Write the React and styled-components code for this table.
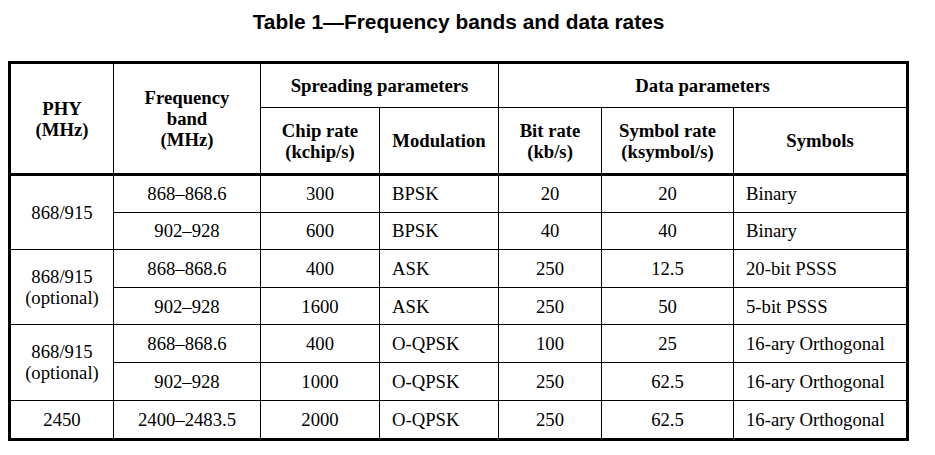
import React from "react";
import styled, { createGlobalStyle } from "styled-components";

const Global = createGlobalStyle`
  html, body { margin: 0; padding: 0; background: #fff; }
  body { font-family: "Liberation Serif", "Times New Roman", serif; color: #000; }
`;

const Page = styled.div`
  width: 901px;
  padding: 10px 0 0 8px;
`;

const Title = styled.h1`
  margin: 0 0 27px;
  font-family: "Liberation Sans", Arial, sans-serif;
  font-weight: 700;
  font-size: 20.9px;
  line-height: 24px;
  text-align: center;
  color: #000;
`;

const Frame = styled.div`
  box-sizing: border-box;
  width: 901px;
  border: 3px solid #000;
`;

const Table = styled.table`
  width: 895px;
  table-layout: fixed;
  border-collapse: collapse;
  border-style: hidden;
  font-family: "Liberation Serif", "Times New Roman", serif;
  font-size: 18.7px;
  line-height: 21px;
  color: #000;
`;

const HeadRow = styled.tr`
  height: ${(p) => p.$h}px;
`;

const Th = styled.th`
  border: 1px solid #000;
  font-weight: 700;
  text-align: center;
  vertical-align: middle;
  padding: 0 4px;
`;

const Body = styled.tbody`
  & > tr:first-child > td {
    border-top: 3px solid #000;
  }
`;

const Row = styled.tr`
  height: 37.6px;
`;

const Td = styled.td`
  border: 1px solid #000;
  font-weight: 400;
  vertical-align: middle;
  text-align: ${(p) => (p.$left ? "left" : "center")};
  padding: ${(p) => (p.$left ? "0 0 0 12px" : "0 4px")};
  white-space: nowrap;
`;

const widths = [102.5, 147, 119, 119, 103, 132, 172.5];

const groups = [
  {
    phy: ["868/915"],
    rows: [
      ["868–868.6", "300", "BPSK", "20", "20", "Binary"],
      ["902–928", "600", "BPSK", "40", "40", "Binary"],
    ],
  },
  {
    phy: ["868/915", "(optional)"],
    rows: [
      ["868–868.6", "400", "ASK", "250", "12.5", "20-bit PSSS"],
      ["902–928", "1600", "ASK", "250", "50", "5-bit PSSS"],
    ],
  },
  {
    phy: ["868/915", "(optional)"],
    rows: [
      ["868–868.6", "400", "O-QPSK", "100", "25", "16-ary Orthogonal"],
      ["902–928", "1000", "O-QPSK", "250", "62.5", "16-ary Orthogonal"],
    ],
  },
  {
    phy: ["2450"],
    rows: [["2400–2483.5", "2000", "O-QPSK", "250", "62.5", "16-ary Orthogonal"]],
  },
];

const Lines = ({ items }) =>
  items.map((t, i) => (
    <React.Fragment key={i}>
      {i > 0 && <br />}
      {t}
    </React.Fragment>
  ));

export default function App() {
  return (
    <>
      <Global />
      <Page>
        <Title>Table 1—Frequency bands and data rates</Title>
        <Frame>
          <Table>
            <colgroup>
              {widths.map((w, i) => (
                <col key={i} style={{ width: `${w}px` }} />
              ))}
            </colgroup>
            <thead>
              <HeadRow $h={43.5}>
                <Th rowSpan={2}>
                  <Lines items={["PHY", "(MHz)"]} />
                </Th>
                <Th rowSpan={2}>
                  <Lines items={["Frequency", "band", "(MHz)"]} />
                </Th>
                <Th colSpan={2}>Spreading parameters</Th>
                <Th colSpan={3}>Data parameters</Th>
              </HeadRow>
              <HeadRow $h={67}>
                <Th>
                  <Lines items={["Chip rate", "(kchip/s)"]} />
                </Th>
                <Th>Modulation</Th>
                <Th>
                  <Lines items={["Bit rate", "(kb/s)"]} />
                </Th>
                <Th>
                  <Lines items={["Symbol rate", "(ksymbol/s)"]} />
                </Th>
                <Th>Symbols</Th>
              </HeadRow>
            </thead>
            <Body>
              {groups.map((g, gi) =>
                g.rows.map((r, ri) => (
                  <Row key={`${gi}-${ri}`}>
                    {ri === 0 && (
                      <Td rowSpan={g.rows.length}>
                        <Lines items={g.phy} />
                      </Td>
                    )}
                    <Td>{r[0]}</Td>
                    <Td>{r[1]}</Td>
                    <Td $left>{r[2]}</Td>
                    <Td>{r[3]}</Td>
                    <Td>{r[4]}</Td>
                    <Td $left>{r[5]}</Td>
                  </Row>
                ))
              )}
            </Body>
          </Table>
        </Frame>
      </Page>
    </>
  );
}
